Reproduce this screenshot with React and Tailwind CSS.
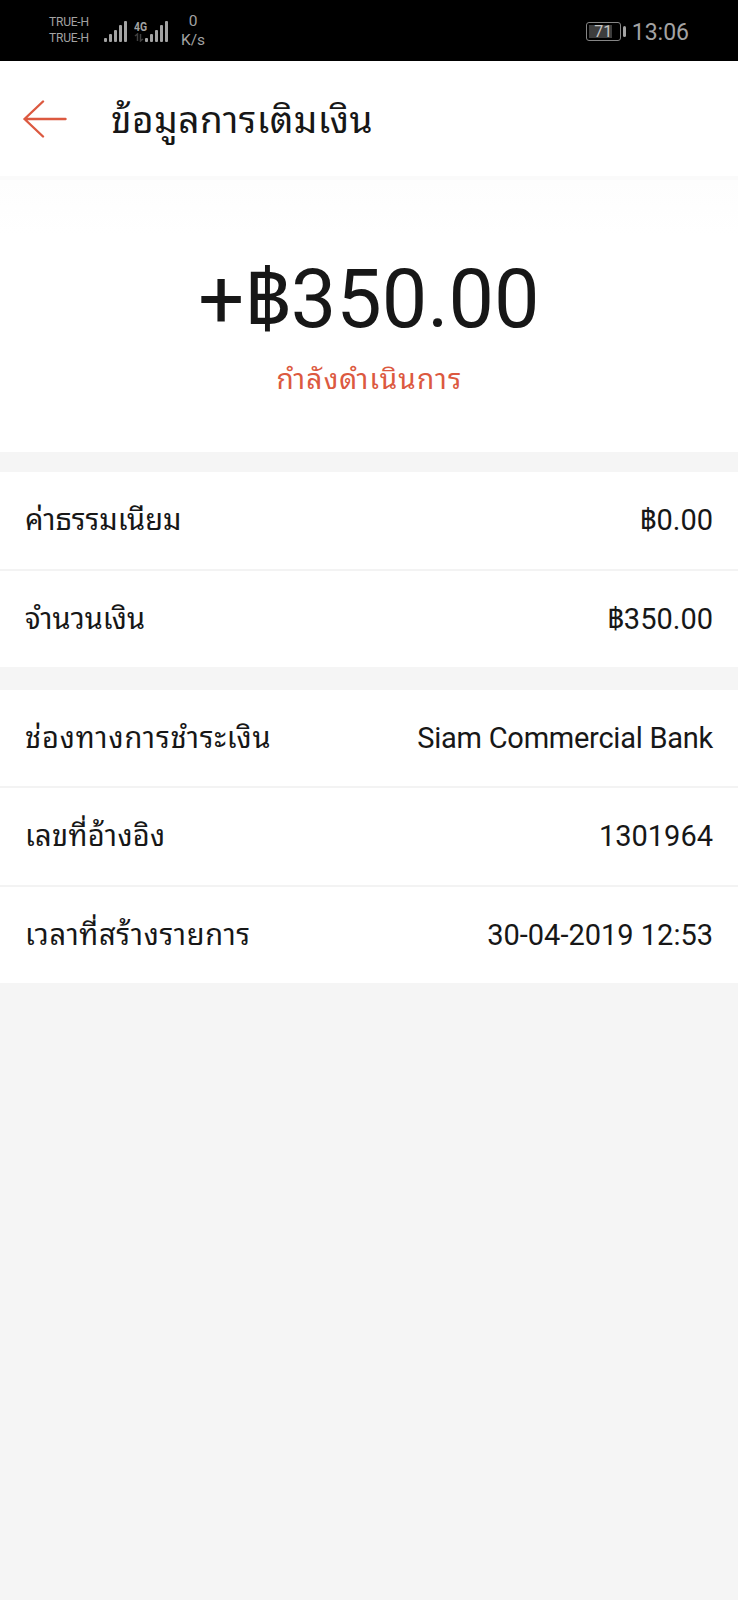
import React from "react";

const FEES = [
  { label: "ค่าธรรมเนียม", value: "฿0.00", height: "h-[99px]", labelClass: "tracking-[0.05px]" },
  { label: "จำนวนเงิน", value: "฿350.00", height: "h-[96px]", labelClass: "tracking-[0.05px]" },
];

const DETAILS = [
  {
    label: "ช่องทางการชำระเงิน",
    value: "Siam Commercial Bank",
    height: "h-[98px]",
    labelClass: "tracking-[0.9px]",
    valueClass: "tracking-[-0.25px]",
  },
  { label: "เลขที่อ้างอิง", value: "1301964", height: "h-[99px]", labelClass: "tracking-[0.35px]" },
  { label: "เวลาที่สร้างรายการ", value: "30-04-2019 12:53", height: "h-[96px]", labelClass: "tracking-[0.7px]" },
];

function SignalBars() {
  return (
    <svg width="23" height="21" viewBox="0 0 23 21" fill="#a3a3a3">
      <rect x="0" y="17" width="3" height="4" rx="1" />
      <rect x="5" y="13" width="3" height="8" rx="1" />
      <rect x="10" y="9" width="3" height="12" rx="1" />
      <rect x="15" y="4" width="3" height="17" rx="1" />
      <rect x="20" y="0" width="3" height="21" rx="1" />
    </svg>
  );
}

function StatusBar() {
  return (
    <div className="flex h-[61px] items-center justify-between bg-black pl-[49px] pr-[49px] text-[#a3a3a3]">
      <div className="flex items-center pt-px">
        <div className="w-[55px] pb-[3px] text-[12px] leading-[16px] tracking-[-0.2px]">
          <p>TRUE-H</p>
          <p>TRUE-H</p>
        </div>
        <SignalBars />
        <div className="ml-[7px] flex w-[11px] flex-col">
          <span className="w-[14px] text-[13px] font-bold leading-[13px] origin-left scale-x-80">4G</span>
          <svg width="11" height="9" viewBox="0 0 11 9" stroke="#3f3f3f" strokeWidth="1.5" fill="none">
            <path d="M1 3 L3.5 1 V8 M6.5 1 V8 L9 6" />
          </svg>
        </div>
        <SignalBars />
        <div className="ml-[13px] text-center text-[15.5px] leading-[19px]">
          <p>0</p>
          <p>K/s</p>
        </div>
      </div>

      <div className="flex items-center pt-[2px]">
        <div className="flex h-[19px] w-[35px] items-center rounded-[3px] border border-[#858585] p-[2px]">
          <div className="flex h-full w-[23px] items-center justify-center bg-[#3d3d3d]">
            <span className="ml-[6px] text-[16px] leading-none text-[#c4c4c4]">71</span>
          </div>
        </div>
        <div className="ml-[2px] h-[11px] w-[3px] rounded-sm bg-[#a3a3a3]" />
        <span className="ml-[6px] pt-px text-[23px] leading-none">13:06</span>
      </div>
    </div>
  );
}

function Header() {
  return (
    <div className="flex h-[115px] items-center bg-white pl-[23px]">
      <button>
        <svg width="44" height="38" viewBox="0 0 44 38" fill="none" stroke="#dc5940" strokeWidth="2.4" strokeLinecap="round" strokeLinejoin="round">
          <path d="M42.5 19 H1.5 M20 1.5 L1.5 19 L20 36.5" />
        </svg>
      </button>
      <h1 className="ml-[44px] pt-[3px] text-[37px] leading-none tracking-[0.5px]">ข้อมูลการเติมเงิน</h1>
    </div>
  );
}

function Section({ rows }) {
  return (
    <div className="divide-y-2 divide-[#f3f3f3] bg-white">
      {rows.map((row) => (
        <div key={row.label} className={`flex items-center justify-between px-[25px] pt-px text-[29px] ${row.height}`}>
          <span className={row.labelClass}>{row.label}</span>
          <span className={row.valueClass}>{row.value}</span>
        </div>
      ))}
    </div>
  );
}

export default function App() {
  return (
    <div className="min-h-[1600px] w-full bg-[#f5f5f5] font-[Roboto,'Noto_Sans_Thai_Looped','Noto_Looped_Thai','Droid_Sans_Thai',Loma,Garuda,Waree,sans-serif] text-[#171717]">
      <StatusBar />
      <Header />

      {/* Amount */}
      <div className="h-[276px] border-t-4 border-[#fafafa] bg-gradient-to-b from-[#fdfdfd] to-white to-20% pt-[72px] text-center">
        <p className="text-[81px] leading-[95px]">+฿350.00</p>
        <p className="mt-[13px] pl-px text-[28px] leading-[40px] tracking-[1.2px] text-[#dc5940]">กำลังดำเนินการ</p>
      </div>

      {/* Details */}
      <div className="mt-[20px]">
        <Section rows={FEES} />
      </div>
      <div className="mt-[23px]">
        <Section rows={DETAILS} />
      </div>
    </div>
  );
}
